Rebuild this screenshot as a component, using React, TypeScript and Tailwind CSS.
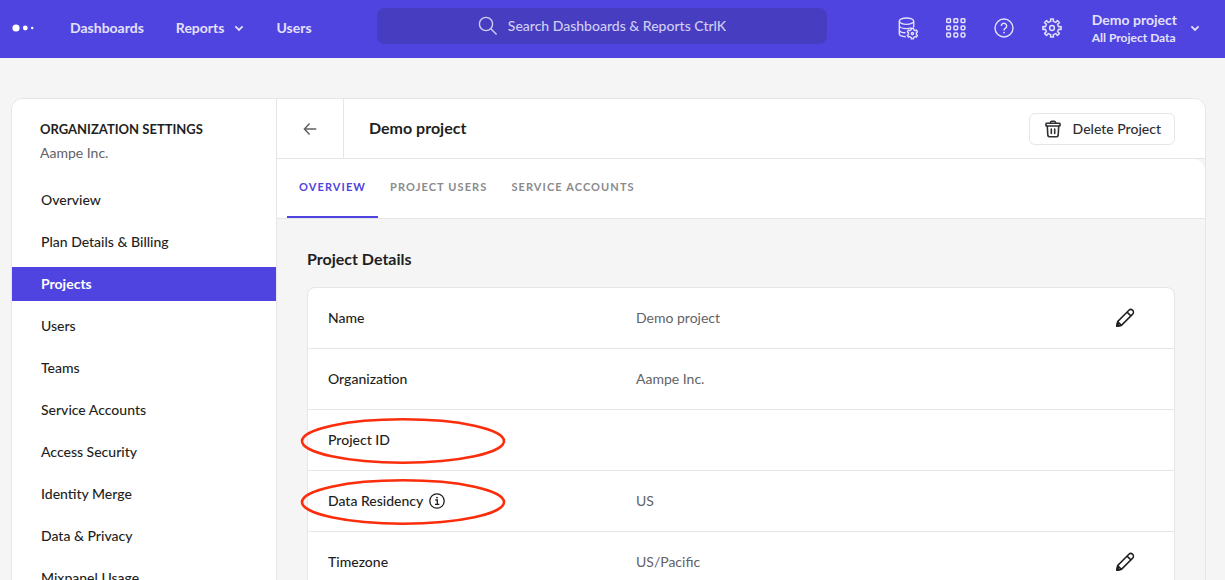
import type { ReactNode } from "react";

const navItems = [
  "Overview",
  "Plan Details & Billing",
  "Projects",
  "Users",
  "Teams",
  "Service Accounts",
  "Access Security",
  "Identity Merge",
  "Data & Privacy",
  "Mixpanel Usage",
];

const tabs = ["Overview", "Project Users", "Service Accounts"];

type Detail = {
  label: string;
  value: string;
  editable?: boolean;
  info?: boolean;
  circled?: boolean;
};

const details: Detail[] = [
  { label: "Name", value: "Demo project", editable: true },
  { label: "Organization", value: "Aampe Inc." },
  { label: "Project ID", value: "", circled: true },
  { label: "Data Residency", value: "US", info: true, circled: true },
  { label: "Timezone", value: "US/Pacific", editable: true },
];

function gearPath(cx: number, cy: number, outer: number, inner: number, teeth: number) {
  const step = (Math.PI * 2) / teeth;
  const points: string[] = [];
  for (let i = 0; i < teeth; i++) {
    const a = i * step - Math.PI / 2;
    const corners: [number, number][] = [
      [inner, a - step * 0.25],
      [outer, a - step * 0.2],
      [outer, a + step * 0.2],
      [inner, a + step * 0.25],
    ];
    for (const [r, t] of corners) {
      points.push(`${(cx + r * Math.cos(t)).toFixed(2)} ${(cy + r * Math.sin(t)).toFixed(2)}`);
    }
  }
  return `M${points.join("L")}Z`;
}

function Logo() {
  return (
    <svg width="22" height="8" viewBox="0 0 22 8" fill="#fff" aria-hidden="true">
      <circle cx="4" cy="4" r="3.6" />
      <circle cx="13.3" cy="4" r="2.4" />
      <circle cx="20.2" cy="4" r="1.2" />
    </svg>
  );
}

function Chevron() {
  return (
    <svg width="10" height="10" viewBox="0 0 10 10" fill="none" stroke="currentColor" strokeWidth="1.8" aria-hidden="true">
      <path d="M1.4 3.3 5 6.9l3.6-3.6" />
    </svg>
  );
}

function SearchIcon() {
  return (
    <svg width="20" height="20" viewBox="0 0 20 20" fill="none" stroke="currentColor" strokeWidth="1.4" aria-hidden="true">
      <circle cx="8" cy="8" r="6.6" />
      <path d="m12.8 12.8 5.8 5.8" />
    </svg>
  );
}

function DatabaseIcon() {
  return (
    <svg width="22" height="24" viewBox="0 0 22 24" fill="none" stroke="currentColor" strokeWidth="1.4" strokeLinejoin="round" aria-hidden="true">
      <ellipse cx="9.500" cy="5.200" rx="7.200" ry="3.200" />
      <path d="M2.300 5.200v12.600c0 1.600 2.600 2.800 6.400 3M16.700 5.200v6M2.300 9.400c0 1.800 3.200 3.200 7.200 3.200 1.700 0 3.200-.2 4.400-.7M2.300 13.700c0 1.600 2.600 2.900 6.200 3.100" />
      <path d={gearPath(15.4, 17.6, 5.4, 4.1, 6)} />
      <circle cx="15.4" cy="17.6" r="1.1" />
    </svg>
  );
}

function GridIcon() {
  const stops = [0.7, 7.9, 15.1];
  return (
    <svg width="20" height="20" viewBox="0 0 20 20" fill="none" stroke="currentColor" strokeWidth="1.5" aria-hidden="true">
      {stops.map((y) => stops.map((x) => <rect key={`${x}-${y}`} x={x} y={y} width="3.8" height="3.8" rx="1.1" />))}
    </svg>
  );
}

function HelpIcon() {
  return (
    <svg width="20" height="20" viewBox="0 0 20 20" fill="none" stroke="currentColor" strokeWidth="1.4" aria-hidden="true">
      <circle cx="10" cy="10" r="9" />
      <path d="M7.3 8a2.7 2.7 0 1 1 4.2 2.2c-1 .7-1.5 1.1-1.5 2.2" />
      <circle cx="10" cy="14.6" r=".9" fill="currentColor" stroke="none" />
    </svg>
  );
}

function GearIcon() {
  return (
    <svg width="20" height="20" viewBox="0 0 20 20" fill="none" stroke="currentColor" strokeWidth="1.5" strokeLinejoin="round" aria-hidden="true">
      <path d={gearPath(10, 10, 9.2, 6.7, 8)} />
      <circle cx="10" cy="10" r="2.4" />
    </svg>
  );
}

function BackIcon() {
  return (
    <svg width="14" height="14" viewBox="0 0 14 14" fill="none" stroke="currentColor" strokeWidth="1.5" aria-hidden="true">
      <path d="M13.3 7H1.5M6.6 1.5 1.4 7l5.2 5.5" />
    </svg>
  );
}

function TrashIcon() {
  return (
    <svg width="16" height="18" viewBox="0 0 16 18" fill="none" stroke="currentColor" strokeWidth="1.6" strokeLinejoin="round" strokeLinecap="round" aria-hidden="true">
      <rect x="1" y="3.3" width="14" height="2.7" rx=".6" />
      <path d="M5.2 3.2c.1-1.3.6-2 1.4-2h2.8c.8 0 1.3.7 1.4 2M2.3 6.2l.5 9c.1 1 .6 1.5 1.5 1.5h7.4c.9 0 1.4-.5 1.5-1.500l.5-9M6.300 9v4.500M9.700 9v4.500" />
    </svg>
  );
}

function PencilIcon() {
  return (
    <svg width="20" height="20" viewBox="0 0 20 20" fill="none" stroke="currentColor" strokeWidth="1.5" strokeLinejoin="round" aria-hidden="true">
      <path d="M1.8 18.2 2.6 13.6 13.9 2.3a2.6 2.6 0 0 1 3.8 3.8L6.4 17.4ZM12.1 4.1l3.8 3.8M2.6 13.6l3.8 3.8" />
      <path d="m1.8 18.2.5-2.5 2 2Z" fill="currentColor" />
    </svg>
  );
}

function InfoIcon() {
  return (
    <svg width="16" height="16" viewBox="0 0 16 16" fill="none" stroke="currentColor" strokeWidth="1.3" aria-hidden="true">
      <circle cx="8" cy="8" r="7.2" />
      <path d="M6.3 7h2v4.4M6 11.4h4.3" />
      <circle cx="8" cy="4.6" r=".9" fill="currentColor" stroke="none" />
    </svg>
  );
}

function Highlight() {
  return (
    <svg
      className="pointer-events-none absolute -left-7 top-1/2 -translate-y-1/2"
      width="206"
      height="50"
      viewBox="0 0 206 50"
      fill="none"
      stroke="#fb2d0b"
      strokeWidth="2.6"
      aria-hidden="true"
    >
      <ellipse cx="103" cy="26" rx="101" ry="21.7" />
    </svg>
  );
}

function IconButton({ label, children }: { label: string; children: ReactNode }) {
  return (
    <button type="button" aria-label={label} className="flex size-6 items-center justify-center">
      {children}
    </button>
  );
}

function TopBar() {
  return (
    <header className="flex h-[58px] shrink-0 items-center bg-[#4f44e0] pb-0.5 pl-1 pr-[25px] text-[#e3e1fa]">
      <nav className="flex flex-1 items-center gap-8 text-sm font-bold">
        <a href="#home" aria-label="Home" className="ml-2 mr-1">
          <Logo />
        </a>
        <a href="#dashboards">Dashboards</a>
        <a href="#reports" className="flex items-center gap-2.5">
          Reports
          <Chevron />
        </a>
        <a href="#users">Users</a>
      </nav>
      <label className="mb-1 flex h-9 w-[450px] items-center justify-center gap-2.5 rounded-lg bg-[#473dc0] text-[#d0cdf3]">
        <SearchIcon />
        <input
          type="text"
          aria-label="Search"
          placeholder="Search Dashboards & Reports CtrlK"
          className="field-sizing-content text-sm font-medium outline-none placeholder:text-[#d0cdf3]"
        />
      </label>
      <div className="flex flex-1 items-center justify-end">
        <div className="flex items-center gap-6">
          <IconButton label="Data management"><DatabaseIcon /></IconButton>
          <IconButton label="Apps"><GridIcon /></IconButton>
          <IconButton label="Help"><HelpIcon /></IconButton>
          <IconButton label="Settings"><GearIcon /></IconButton>
        </div>
        <button type="button" className="ml-7 flex items-center gap-[13px] text-left font-bold">
          <span className="flex flex-col pt-0.5">
            <span className="text-sm leading-[18px]">Demo project</span>
            <span className="text-xs leading-[18px]">All Project Data</span>
          </span>
          <Chevron />
        </button>
      </div>
    </header>
  );
}

function Sidebar() {
  return (
    <aside className="w-[265px] shrink-0 border-r border-[#e6e6e6] bg-white">
      <div className="px-7 pt-5">
        <h2 className="text-[13px] font-bold leading-5">ORGANIZATION SETTINGS</h2>
        <p className="mt-1 text-sm leading-5 text-[#626266]">Aampe Inc.</p>
      </div>
      <nav className="mt-5 flex flex-col gap-2">
        {navItems.map((item) => (
          <a
            key={item}
            href="#settings"
            aria-current={item === "Projects" ? "page" : undefined}
            className={
              item === "Projects"
                ? "flex h-[34px] items-center bg-[#4f44e0] px-[29px] text-sm font-bold text-white"
                : "flex h-[34px] items-center px-[29px] text-sm font-medium"
            }
          >
            {item}
          </a>
        ))}
      </nav>
    </aside>
  );
}

function ProjectDetails() {
  return (
    <section className="px-[30px] pt-7">
      <h2 className="text-base font-bold leading-6">Project Details</h2>
      <dl className="mt-4 rounded-lg border border-[#e6e6e6] bg-white text-sm">
        {details.map((row) => (
          <div key={row.label} className="flex h-[61px] items-center border-b border-[#e6e6e6] px-5">
            <dt className="relative flex h-full w-[308px] items-center gap-1.5 font-medium">
              {row.label}
              {row.info && <InfoIcon />}
              {row.circled && <Highlight />}
            </dt>
            <dd className="flex-1 text-[#626266]">{row.value}</dd>
            {row.editable && (
              <dd className="mr-[17px]">
                <IconButton label={`Edit ${row.label}`}><PencilIcon /></IconButton>
              </dd>
            )}
          </div>
        ))}
      </dl>
    </section>
  );
}

export default function App() {
  return (
    <div className="flex h-screen flex-col overflow-hidden bg-[#f5f5f5] font-['Lato',sans-serif] text-[#1f1f23]">
      <TopBar />
      <div className="ml-[11px] mr-[19px] mt-10 flex shrink-0 overflow-hidden rounded-xl border border-[#e6e6e6]">
        <Sidebar />
        <main className="min-w-0 flex-1">
          <div className="flex h-[60px] items-center border-b border-[#e6e6e6] bg-white pr-[30px]">
            <button
              type="button"
              aria-label="Back"
              className="flex h-full w-[67px] items-center justify-center border-r border-[#e6e6e6] text-[#626266]"
            >
              <BackIcon />
            </button>
            <h1 className="ml-[25px] flex-1 pb-0.5 text-base font-bold">Demo project</h1>
            <button
              type="button"
              className="flex h-8 items-center gap-3 rounded-md border border-[#e6e6e6] pl-[15px] pr-[13px] text-sm font-medium text-[#2f2f33]"
            >
              <TrashIcon />
              Delete Project
            </button>
          </div>
          <div role="tablist" className="flex h-[60px] rounded-tr-xl border-b border-[#e6e6e6] bg-white pl-2.5">
            {tabs.map((tab, i) => (
              <button
                key={tab}
                type="button"
                role="tab"
                aria-selected={i === 0}
                className={
                  i === 0
                    ? "border-b-2 border-[#4f44e0] px-3 text-[11px] font-bold uppercase tracking-widest text-[#4f44e0]"
                    : "border-b-2 border-transparent px-3 text-[11px] font-bold uppercase tracking-widest text-[#8a8a8e]"
                }
              >
                {tab}
              </button>
            ))}
          </div>
          <ProjectDetails />
        </main>
      </div>
    </div>
  );
}
